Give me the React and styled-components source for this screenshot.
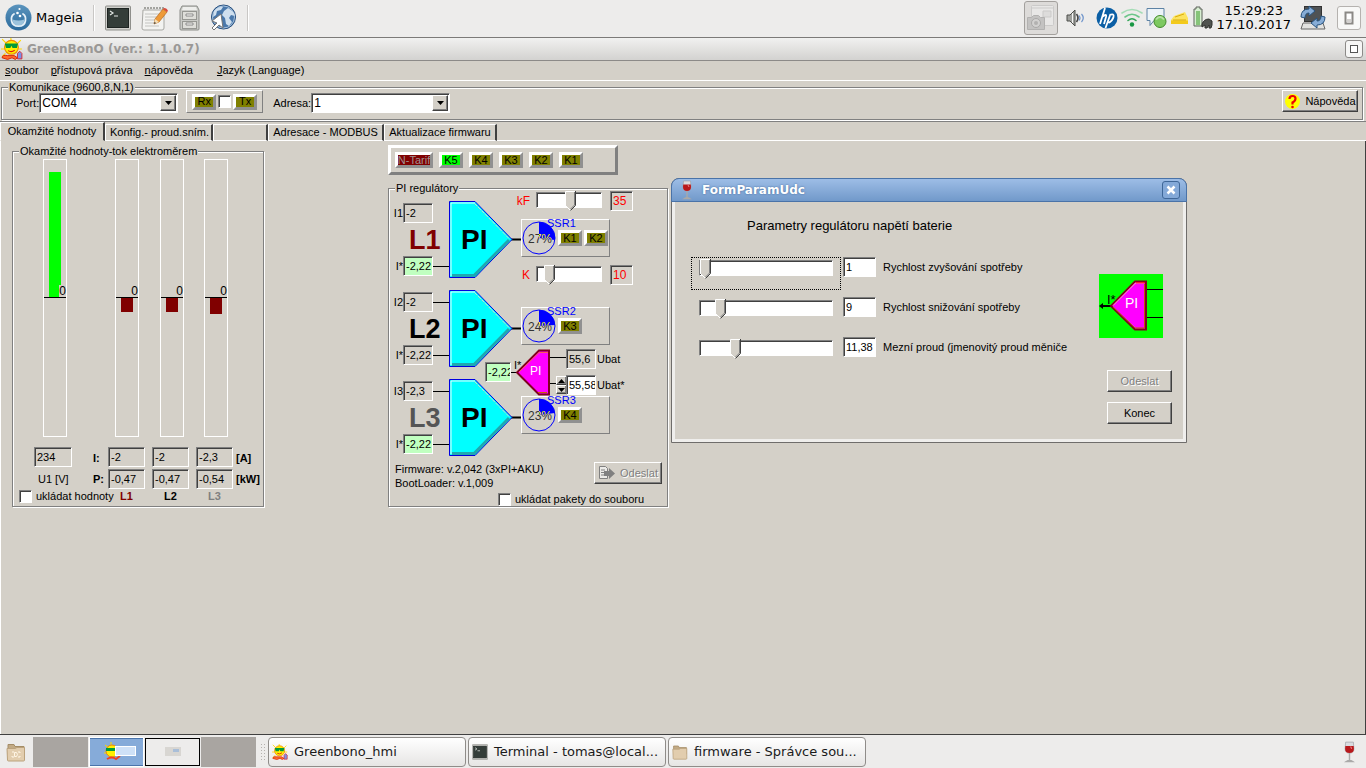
import { useState } from "react"
import styled, { createGlobalStyle, css } from "styled-components"

const GlobalStyle = createGlobalStyle`
    *{
        box-sizing: border-box;
    }
    body{
        margin: 0;
        background-color: #d4d0c8;
        font-family: "Liberation Sans", Arial, sans-serif;
        font-size: 11px;
        line-height: 14px;
        color: #000000;
    }
    button, input, select{
        font: inherit;
        color: inherit;
        margin: 0;
    }
    svg{
        display: block;
        flex: none;
    }
`

const sunken = css`
    border: 1px solid;
    border-color: #808080 #ffffff #ffffff #808080;
    box-shadow: inset 1px 1px 0 #404040;
`

const raised = css`
    border: 1px solid;
    border-color: #ffffff #404040 #404040 #ffffff;
    box-shadow: inset -1px -1px 0 #808080;
`

const Desktop = styled.div`
    min-height: 100vh;
    display: flex;
    flex-direction: column;
    position: relative;
`

/* top panel */
const TopPanel = styled.header`
    height: 38px;
    display: flex;
    align-items: center;
    justify-content: space-between;
    background-color: #edeceb;
    border-bottom: 1px solid #7c7a78;
    font-family: "DejaVu Sans", sans-serif;
    font-size: 13px;
    padding: 0 5px 2px;
`
const PanelGroup = styled.div`
    display: flex;
    align-items: center;
    gap: ${(prop) => prop.$gap}px;
`
const PanelButton = styled.button`
    display: flex;
    align-items: center;
    gap: 4px;
    padding: 0;
    border: 0;
    background: none;
`
const ShotButton = styled(PanelButton)`
    width: 34px;
    height: 34px;
    justify-content: center;
    border: 1px solid #a3a09d;
    border-radius: 3px;
    background-color: #dddbd9;
    margin-right: 5px;
`
const LogoutButton = styled(PanelButton)`
    width: 24px;
    height: 24px;
    justify-content: center;
    border: 1px solid #b5b2af;
    border-radius: 3px;
    background-color: #f8f8f7;
`
const Divider = styled.div`
    width: 2px;
    height: 26px;
    background-color: #c9c7c5;
    border-right: 1px solid #ffffff;
`
const Spacer = styled.div`
    width: 5px;
`
const Clock = styled.time`
    text-align: center;
    line-height: 14px;
    margin-right: 6px;
`

/* main window */
const MainWindow = styled.main`
    flex: 1;
    display: flex;
    flex-direction: column;
    border-bottom: 1px solid #404040;
`
const TitleBar = styled.div`
    height: 23px;
    display: flex;
    align-items: center;
    gap: 4px;
    padding: 0 3px 0 1px;
    background: linear-gradient(#f1f1f0, #d3d2d0);
    border-bottom: 1px solid #8c8a88;
    font-family: "DejaVu Sans", sans-serif;
    color: #9a9896;
    h1{
        flex: 1;
        margin: 0;
        font-size: 12px;
        font-weight: 700;
        line-height: 16px;
    }
`
const MaximizeButton = styled.button`
    width: 18px;
    height: 18px;
    display: flex;
    align-items: center;
    justify-content: center;
    padding: 0;
    border: 1px solid #8c8a88;
    border-radius: 3px;
    background-color: #f6f6f5;
`
const MenuBar = styled.nav`
    height: 20px;
    display: flex;
    align-items: center;
    gap: 12px;
    padding: 0 5px 1px;
    border-bottom: 1px solid #ffffff;
    a{
        color: #000000;
        text-decoration: none;
    }
    a::first-letter{
        text-decoration: underline;
    }
    a:last-child{
        margin-left: 12px;
    }
`

const GroupBox = styled.fieldset`
    min-width: 0;
    margin: 0;
    padding: 0;
    border: 1px solid #808080;
    box-shadow: inset 1px 1px 0 #ffffff, 1px 1px 0 #ffffff;
    legend{
        margin-left: 6px;
        padding: 0 1px;
        line-height: 12px;
        background-color: #d4d0c8;
    }
`
const CommBox = styled(GroupBox)`
    margin: 0 3px 0 1px;
    height: 39px;
`
const CommRow = styled.div`
    display: flex;
    align-items: flex-start;
    padding: 0 4px 0 14px;
    margin-top: -3px;
`
const CommLabel = styled.label`
    display: flex;
    align-items: center;
    margin-top: 3px;
`
const ComboFrame = styled.span`
    display: flex;
    position: relative;
`
const Combo = styled.select`
    ${sunken}
    appearance: none;
    width: 139px;
    height: 20px;
    padding: 0 20px 0 2px;
    border-radius: 0;
    background-color: #ffffff;
    font-size: 12px;
`
const ComboArrow = styled.span`
    ${raised}
    position: absolute;
    right: 2px;
    top: 2px;
    width: 16px;
    height: 16px;
    display: flex;
    align-items: center;
    justify-content: center;
    background-color: #d4d0c8;
    pointer-events: none;
`
const RxTxPanel = styled.div`
    height: 23px;
    display: flex;
    align-items: center;
    gap: 2px;
    padding: 0 5px;
    margin: 0 10px 0 8px;
    border: 1px solid;
    border-color: #ffffff #808080 #808080 #ffffff;
`
const Lamp = styled.span`
    min-width: 24px;
    height: 16px;
    display: flex;
    align-items: center;
    justify-content: center;
    overflow: hidden;
    white-space: nowrap;
    border: 3px solid;
    border-color: #ffffff #909090 #909090 #ffffff;
    background-color: ${(prop) => prop.$color || "#808000"};
    color: ${(prop) => prop.$ink || "#000000"};
    line-height: 11px;
`
const TarifLamp = styled(Lamp)`
    width: 38px;
`
const CheckBox = styled.input.attrs({ type: "checkbox" })`
    ${sunken}
    appearance: none;
    flex: none;
    width: 13px;
    height: 13px;
    background-color: #ffffff;
    &:checked{
        background-color: #404040;
    }
`
const PushButton = styled.button`
    ${raised}
    display: flex;
    align-items: center;
    justify-content: center;
    gap: 4px;
    width: ${(prop) => prop.$width}px;
    height: 22px;
    padding: 0;
    background-color: #d4d0c8;
    white-space: nowrap;
    &:disabled{
        color: #808080;
        text-shadow: 1px 1px 0 #ffffff;
    }
`
const HelpButton = styled(PushButton)`
    margin-left: auto;
`

/* tabs */
const TabList = styled.div`
    display: flex;
    align-items: flex-end;
    height: 20px;
    margin-top: 1px;
    border-top: 1px solid #808080;
    box-shadow: inset 0 -1px 0 #ffffff;
`
const Tab = styled.button`
    width: ${(prop) => prop.$width}px;
    height: ${(prop) => (prop.$active ? 19 : 17)}px;
    padding: 0 4px 1px;
    overflow: hidden;
    white-space: nowrap;
    background-color: #d4d0c8;
    border: 1px solid;
    border-width: 1px 2px 1px 1px;
    border-color: #ffffff #404040 ${(prop) => (prop.$active ? "#d4d0c8" : "#ffffff")} #ffffff;
`
const TabPage = styled.section`
    flex: 1;
    display: flex;
    align-items: flex-start;
    gap: 124px;
    padding: 4px 12px;
    border-left: 1px solid #ffffff;
    border-right: 1px solid #404040;
`

/* meter readings */
const MeterBox = styled(GroupBox)`
    width: 252px;
    margin-left: -1px;
    padding: 2px 0 3px 6px;
    legend{
        margin-left: 0;
    }
`
const MeterGrid = styled.div`
    display: grid;
    grid-template-columns: 74px 15px 44px 44px 40px auto;
    grid-template-rows: 288px 22px 20px 14px;
`
const Gauge = styled.div`
    width: 24px;
    height: 278px;
    margin-left: ${(prop) => prop.$left}px;
    display: flex;
    flex-direction: column;
    border: 1px solid #ffffff;
`
const GaugeHalf = styled.div`
    height: 138px;
    display: flex;
    position: relative;
    justify-content: center;
    align-items: ${(prop) => (prop.$upper ? "flex-end" : "flex-start")};
    border-bottom: ${(prop) => (prop.$upper ? "1px solid #000000" : "0")};
`
const GaugeFill = styled.div`
    width: 12px;
    background-color: ${(prop) => (prop.$upper ? "#00ff00" : "#800000")};
`
const GaugeZero = styled.span`
    position: absolute;
    right: 0;
    bottom: 0;
    font-size: 12px;
    line-height: 12px;
    background-color: #d4d0c8;
`
const Field = styled.input`
    ${sunken}
    width: ${(prop) => prop.$width || 30}px;
    height: 20px;
    padding: 0 0 0 2px;
    border-radius: 0;
    background-color: ${(prop) => prop.$fill || "#d4d0c8"};
    color: ${(prop) => prop.$ink || "#000000"};
    outline: 0;
`
const VoltField = styled(Field)`
    margin-left: 15px;
`
const Caption = styled.span`
    align-self: center;
    padding-left: ${(prop) => prop.$indent || 0}px;
    font-weight: ${(prop) => (prop.$bold ? 700 : 400)};
    color: ${(prop) => prop.$ink || "#000000"};
`
const StoreLabel = styled.label`
    grid-column: 1 / 3;
    display: flex;
    align-items: center;
    gap: 4px;
    white-space: nowrap;
`

/* regulators */
const RegulatorColumn = styled.div`
    display: flex;
    flex-direction: column;
    gap: 7px;
`
const LampPanel = styled.div`
    width: 230px;
    height: 30px;
    display: flex;
    align-items: center;
    gap: 6px;
    padding: 0 4px;
    border: 3px solid;
    border-color: #ffffff #808080 #808080 #ffffff;
`
const RegulatorBox = styled(GroupBox)`
    width: 280px;
`
const Schematic = styled.div`
    display: flex;
    align-items: flex-start;
`
const ChannelColumn = styled.div`
    display: flex;
    flex-direction: column;
    gap: 12px;
    padding: 7px 0 0 3px;
`
const Channel = styled.div`
    display: flex;
    height: 77px;
`
const ChannelInputs = styled.div`
    width: 57px;
    display: flex;
    flex-direction: column;
    justify-content: space-between;
    padding: 2px 0 2px;
`
const Wired = styled.label`
    display: flex;
    align-items: center;
    span{
        width: 11px;
        text-align: right;
    }
    &::after{
        content: "";
        flex: 1;
        border-top: 1px solid ${(prop) => (prop.$open ? "transparent" : "#000000")};
    }
`
const PhaseName = styled.strong`
    padding-left: 17px;
    font-size: 27px;
    line-height: 28px;
    color: ${(prop) => prop.$ink};
`
const OutputColumn = styled.div`
    flex: 1;
    display: flex;
    flex-direction: column;
    margin-top: -4px;
`
const GainRow = styled.label`
    height: 22px;
    display: flex;
    align-items: center;
    color: #ff0000;
    font-size: 12px;
    span{
        width: 14px;
        margin-left: -5px;
        margin-right: 6px;
        text-align: right;
    }
    input:last-child{
        margin-left: 8px;
    }
`
const SsrBox = styled.div`
    width: 89px;
    height: 38px;
    margin: ${(prop) => prop.$margin};
    display: flex;
    align-items: center;
    gap: 2px;
    position: relative;
    border: 1px solid;
    border-color: #ffffff #808080 #808080 #ffffff;
`
const SsrName = styled.span`
    position: absolute;
    left: 25px;
    top: -3px;
    line-height: 12px;
    color: #0000ff;
`
const BatteryStage = styled.div`
    display: flex;
    height: 47px;
    margin-left: -36px;
    position: relative;
`
const BatteryInput = styled.div`
    padding-top: 13px;
`
const BatteryFields = styled.div`
    display: flex;
    flex-direction: column;
    gap: 6px;
    margin-left: -10px;
    white-space: nowrap;
`
const BatteryRow = styled.label`
    display: flex;
    align-items: center;
    justify-content: flex-end;
    gap: 1px;
    span:last-child{
        width: 32px;
    }
`
const Spinner = styled.span`
    display: flex;
    flex-direction: column;
    margin-right: -2px;
    button{
        ${raised}
        width: 11px;
        height: 9px;
        padding: 0;
        display: flex;
        align-items: center;
        justify-content: center;
        background-color: #d4d0c8;
    }
`
const VersionRow = styled.div`
    display: flex;
    justify-content: space-between;
    padding: 6px 5px 0 6px;
    p{
        margin: 0;
    }
`
const PacketLabel = styled.label`
    display: flex;
    align-items: center;
    gap: 4px;
    margin: 2px 0 0 109px;
`

const sliderThumb = `url("data:image/svg+xml,%3Csvg xmlns='http://www.w3.org/2000/svg' width='11' height='20'%3E%3Cpath d='M0 0H11V14L5.500 20L0 14Z' fill='%23d4d0c8'/%3E%3Cpath d='M.5 15V.5H10' fill='none' stroke='white'/%3E%3Cpath d='M.5 14.500L5.500 19.500' stroke='white'/%3E%3Cpath d='M9.500 1V14L5.500 18' fill='none' stroke='%23808080'/%3E%3Cpath d='M10.500 0V14.500L5.500 19.500' fill='none' stroke='%23404040'/%3E%3C/svg%3E")`

const Slider = styled.input.attrs({ type: "range" })`
    appearance: none;
    width: ${(prop) => prop.$width}px;
    height: 20px;
    background: none;
    outline: 0;
    &::-webkit-slider-runnable-track{
        ${sunken}
        height: 16px;
        margin-bottom: 2px;
        background-color: #ffffff;
    }
    &::-webkit-slider-thumb{
        appearance: none;
        width: 11px;
        height: 20px;
        margin-top: -2px;
        background: ${sliderThumb};
    }
`

/* parameter dialog */
const Dialog = styled.section`
    position: absolute;
    left: 671px;
    top: 178px;
    width: 516px;
    border: 1px solid #6f6d6b;
    border-radius: 8px 8px 0 0;
    background-color: #d4d0c8;
`
const DialogTitle = styled.div`
    height: 24px;
    display: flex;
    align-items: center;
    gap: 10px;
    margin: -1px -1px 0;
    padding: 0 6px 0 10px;
    border: 1px solid #4a73a8;
    border-radius: 8px 8px 0 0;
    background: linear-gradient(#9dbde6, #7199ca);
    color: #ffffff;
    h2{
        flex: 1;
        margin: 0;
        font-family: "DejaVu Sans", sans-serif;
        font-size: 12px;
        font-weight: 700;
        line-height: 16px;
        text-shadow: 0 0 2px #3e6597;
    }
`
const CloseButton = styled.button`
    width: 18px;
    height: 18px;
    display: flex;
    align-items: center;
    justify-content: center;
    padding: 0;
    border: 1px solid #3f6798;
    border-radius: 3px;
    background-color: #84a9d8;
`
const DialogBody = styled.div`
    display: flex;
    justify-content: space-between;
    padding: 16px 11px 15px 16px;
    border: 3px solid #efeeec;
    border-top: 0;
    h3{
        margin: 0 0 23px 56px;
        font-size: 13px;
        font-weight: 400;
        line-height: 16px;
    }
`
const ParamRow = styled.div`
    height: 40px;
    display: flex;
    align-items: flex-start;
    label{
        padding: 3px 0 0 7px;
    }
`
const SliderFrame = styled.div`
    width: 150px;
    height: 33px;
    margin-right: 2px;
    padding: 1px 7px;
    border: 1px dotted ${(prop) => (prop.$focused ? "#000000" : "transparent")};
`
const DialogSide = styled.div`
    display: flex;
    flex-direction: column;
    align-items: flex-end;
    padding-top: 56px;
    gap: 10px;
    svg{
        margin: 0 9px 22px 0;
    }
`

/* bottom panel */
const TaskBar = styled.footer`
    height: 33px;
    display: flex;
    align-items: center;
    padding: 0 11px 0 6px;
    background-color: #edeceb;
    font-family: "DejaVu Sans", sans-serif;
    font-size: 13px;
    > svg:last-child{
        margin-left: auto;
    }
`
const Pager = styled.div`
    display: flex;
    gap: 1px;
    margin: 0 4px 0 7px;
    background-color: #edeceb;
`
const Workspace = styled.button`
    width: 55px;
    height: 30px;
    display: flex;
    align-items: center;
    justify-content: center;
    padding: 0;
    border: 0;
    background-color: #a9a5a1;
    ${(prop) => prop.$active && css`
        background-color: #86abd9;
        border: 1px solid #ffffff;
        box-shadow: inset 0 1px 0 #4a74ab, inset 0 -1px 0 #4a74ab;
    `}
    ${(prop) => prop.$framed && css`
        height: 28px;
        align-self: center;
        background-color: #edeceb;
        border: 1px solid #000000;
    `}
`
const Grip = styled.div`
    width: 6px;
    height: 18px;
    margin-right: 2px;
    background-image: radial-gradient(#b4b1ae 1px, transparent 1px);
    background-size: 3px 3px;
`
const TaskButton = styled.button`
    width: 198px;
    height: 30px;
    display: flex;
    align-items: center;
    gap: 6px;
    margin-right: 2px;
    padding: 0 3px;
    border: 1px solid #8f8c89;
    border-radius: 4px;
    background: linear-gradient(#ffffff, #e6e5e4);
    color: #1a1a1a;
    white-space: nowrap;
`

const MageiaIcon = () => (
    <svg width="27" height="27" viewBox="0 0 27 27">
        <defs>
            <linearGradient id="mageia" x2="0" y2="1">
                <stop stopColor="#5b94bd" />
                <stop offset="1" stopColor="#2b6a9c" />
            </linearGradient>
        </defs>
        <circle cx="13.500" cy="13.500" r="13" fill="url(#mageia)" />
        <path d="M9 10C5.500 12 4.500 22 13.500 22S21.500 12 18 10" fill="none" stroke="#e7f1f8" strokeWidth="1.800" strokeLinecap="round" />
        <path d="M7.500 15.500q6 2 12 0q0 6-6 6t-6-6" fill="#9cc3dd" />
        <circle cx="12.500" cy="9" r="1.300" fill="#fff" />
        <circle cx="14.500" cy="5" r="1.100" fill="#fff" />
        <circle cx="15" cy="12" r="1.300" fill="#fff" />
    </svg>
)

const TerminalIcon = ({ size }) => (
    <svg width={size} height={size} viewBox="0 0 26 26">
        <rect x=".5" y="1" width="25" height="24" rx="1" fill="#d0d0cc" stroke="#8f8f8b" />
        <rect x="2.500" y="3.500" width="21" height="19" fill="#343d39" stroke="#1e2422" />
        <path d="M5 6l3 2-3 2M9 11h4" fill="none" stroke="#e2e6e3" strokeWidth="1.200" />
    </svg>
)

const NotesIcon = () => (
    <svg width="28" height="26" viewBox="0 0 28 26">
        <path d="M2 5h21v18q0 2-2 2H3q-2 0-2-2z" fill="#f3f3f1" stroke="#a7a7a3" />
        <path d="M4 4v-2m3 2v-2m3 2v-2m3 2v-2m3 2v-2m3 2v-2m3 2v-2" stroke="#8a8a86" strokeWidth="1.500" />
        <path d="M4 9h15M4 12h13M4 15h10M4 18h9M4 21h14" stroke="#c3c3c0" />
        <path d="M13 19l1-5L22 4l4 3-8 10z" fill="#ee9a38" stroke="#b86a1e" strokeWidth=".7" />
        <path d="M22 4l1-1q3 0 4 3l-1 1z" fill="#d94b3d" />
        <path d="M13 19l1-5 4 3z" fill="#f4dfb8" />
        <path d="M13 19l.5-2 1.500 1z" fill="#222" />
    </svg>
)

const CabinetIcon = () => (
    <svg width="21" height="26" viewBox="0 0 21 26">
        <path d="M3 1h15l2 4v19q0 1-1 1H2q-1 0-1-1V5z" fill="#c9cac6" stroke="#8b8c88" />
        <path d="M4 2h13l1 3H3z" fill="#eeeeec" />
        <rect x="3.500" y="6.500" width="14" height="8" fill="#deded9" stroke="#969792" />
        <rect x="3.500" y="16.500" width="14" height="7" fill="#deded9" stroke="#969792" />
        <path d="M7 9h7v2H7zM7 18h7v2H7z" fill="#f8f8f6" stroke="#777" strokeWidth=".8" />
    </svg>
)

const GlobeIcon = () => (
    <svg width="27" height="27" viewBox="0 0 27 27">
        <circle cx="13.500" cy="13" r="12" fill="#4a78ab" stroke="#294f7d" />
        <circle cx="13.500" cy="13" r="11" fill="none" stroke="#a9c4df" />
        <path d="M4 7q5-5 9-4l-2 3-4 1-1 4-3 2zM14 7l4-3q6 3 7 8l-4-1-2 3 3 4-3 4-3-2-1-6-3-3z" fill="#cfdfee" />
        <path d="M11 10l2 14-4-3-5 5-2-2 5-5-5-2z" fill="#fff" stroke="#777" />
    </svg>
)

const ShotIcon = () => (
    <svg width="29" height="28" viewBox="0 0 29 28" opacity=".5">
        <rect x="5.500" y="1.500" width="22" height="20" rx="1" fill="#f4f4f4" stroke="#bbb" />
        <path d="M6 4h21M17 7h8v6h-8z" stroke="#bbb" fill="#ddd" />
        <path d="M1.500 13.500h4l2-2h5l2 2h4v12h-17z" fill="#aaa" stroke="#888" />
        <circle cx="10" cy="19" r="4.500" fill="#c9c9c9" stroke="#777" />
        <circle cx="10" cy="19" r="2" fill="#888" />
    </svg>
)

const SpeakerIcon = () => (
    <svg width="19" height="20" viewBox="0 0 19 20">
        <path d="M1 7h3l5-5v16l-5-5H1z" fill="#a0a19d" stroke="#4d4e4b" />
        <path d="M6.500 5v10" stroke="#f4f4f4" />
        <path d="M10.500 6q3 4 0 8" fill="none" stroke="#444" strokeWidth="1.600" />
        <path d="M13 7.500q2 2.500 0 5M15.500 6q3.500 4 0 8" fill="none" stroke="#6d93cb" strokeWidth="1.200" />
    </svg>
)

const HpIcon = () => (
    <svg width="22" height="22" viewBox="0 0 22 22">
        <circle cx="11" cy="11" r="10.500" fill="#0b5fa5" />
        <path d="M9 1L4 17M6 10q5-4 4 0l-2 7M14.500 7l-5 14M13.500 8q5-2 4 2t-5 6" fill="none" stroke="#fff" strokeWidth="1.800" />
    </svg>
)

const WifiIcon = () => (
    <svg width="22" height="19" viewBox="0 0 22 19">
        <g fill="none" strokeWidth="1.600" strokeLinecap="round">
            <path d="M1 5q10-7 20 0" stroke="#a5dcb6" />
            <path d="M4 9q7-5.500 14 0" stroke="#6cc689" />
            <path d="M7 12.500q4-3.500 8 0" stroke="#31a556" />
        </g>
        <circle cx="11" cy="16.500" r="2.200" fill="#189743" />
    </svg>
)

const ChatIcon = () => (
    <svg width="21" height="22" viewBox="0 0 21 22">
        <path d="M1 1.500h17v12H8l-4 5v-5H1z" fill="#edf3f8" stroke="#5e83a5" />
        <circle cx="14" cy="14.500" r="6" fill="#7dc860" stroke="#428a2b" />
        <path d="M10 12.500q4-5 8 0" fill="none" stroke="#b6e2a4" strokeWidth="2" />
    </svg>
)

const NoteIcon = () => (
    <svg width="19" height="14" viewBox="0 0 19 14">
        <path d="M4 5l11-4 3 6v6H1V9z" fill="#fce35e" />
        <path d="M1 9.500h17V13H1z" fill="#f3ca1c" />
        <path d="M5 6l9-3M3 9h13" stroke="#d9ac10" />
    </svg>
)

const BatteryIcon = () => (
    <svg width="22" height="23" viewBox="0 0 22 23">
        <path d="M4 1h4v2h2v17H2V3h2z" fill="#d8eed2" stroke="#5c625a" />
        <rect x="4" y="5" width="4" height="14" fill="#86c479" />
        <path d="M10 18q2-5 7-5l3 2v4l-1 3h-2v-3l-2 3h-2v-3l-3 2z" fill="#50534f" stroke="#30332f" />
    </svg>
)

const UpdateIcon = () => (
    <svg width="26" height="26" viewBox="0 0 26 26">
        <rect x="4.500" y="1.500" width="17" height="15" fill="#4f5254" stroke="#333" />
        <path d="M3 18h20l2 6H1z" fill="#e2e2e0" stroke="#666" />
        <path d="M1 12q0-8 8-8V1l6 5-6 5V8q-4 0-4 5z" fill="#86acd6" stroke="#27537f" />
        <path d="M25 12q0 8-8 8v3l-6-5 6-5v3q4 0 4-5z" fill="#86acd6" stroke="#27537f" />
    </svg>
)

const SwitchIcon = () => (
    <svg width="10" height="14" viewBox="0 0 10 14">
        <rect x="1.500" y="1.500" width="7" height="11" fill="#fff" stroke="#8b8986" strokeWidth="2" />
        <path d="M3 8h4v4H3z" fill="#d3d1cf" />
    </svg>
)

const SunIcon = ({ size }) => (
    <svg width={size} height={size} viewBox="0 0 20 20">
        <path d="M1 1l4 4M9 0v3M18 2l-3 3M0 10h3M19 10h-3M1 17l3-3" stroke="#ffd800" />
        <path d="M1 18q0-3 5-2l6 0 3 2-2 1.500-3-1.500-4 1.500z" fill="#ff6a2a" stroke="#d01c00" strokeWidth=".8" />
        <circle cx="9.500" cy="8.500" r="6.300" fill="#ffee00" stroke="#f08a00" />
        <path d="M3.500 5h12l-1 4h-4l-1-2-1 2h-4z" fill="#009a38" />
        <path d="M6.500 11.500q3 2 6-.5" fill="none" stroke="#e01010" />
        <path d="M15 14l2-2 2 2v5h-4z" fill="#7990e8" stroke="#e02020" strokeWidth=".8" />
    </svg>
)

const HelpIcon = () => (
    <svg width="17" height="17" viewBox="0 0 17 17">
        <circle cx="8.500" cy="8.500" r="7.500" fill="#ffff00" />
        <path d="M5.500 6q0-3 3-3t3 2.500-3 4v2" fill="none" stroke="#ee0000" strokeWidth="2.200" />
        <circle cx="8.500" cy="14" r="1.300" fill="#ee0000" />
    </svg>
)

const WineIcon = ({ height }) => (
    <svg width={height / 2} height={height} viewBox="0 0 10 20">
        <path d="M1.500 1h7l.5 6q0 4-4 4T1 7z" fill="#dadce0" stroke="#9a9ca0" strokeWidth=".6" />
        <path d="M1.200 4.500h7.600L9 7q0 4-4 4T1 7z" fill="#b8191c" />
        <path d="M6 5l1 2" stroke="#f08080" />
        <path d="M5 11v6.500M2 18.700q3-2 6 0z" fill="#ccc" stroke="#aaa9a8" strokeWidth="1.300" />
    </svg>
)

const FolderIcon = ({ home, size }) => (
    <svg width={size} height={size} viewBox="0 0 20 20">
        <path d="M2 2.500h6l1 2h9v8H2z" fill="#c2aa85" stroke="#a48c66" />
        <path d="M1 6.500h8l2-1h7.500v12.500q0 1-1 1h-15q-1 0-1-1z" fill="#e2cdae" stroke="#bba27c" />
        {home && <path d="M6 10h2M12 10h2v1M6 15v-1M6 15h2M12 15h2v-1M8.500 10.500h2q2 2 0 4h-2z" fill="none" stroke="#fff6e6" />}
    </svg>
)

const SendIcon = () => (
    <svg width="18" height="16" viewBox="0 0 18 16">
        <path d="M1.500 1.500h6l2 2v10h-8z" fill="#ecebe8" stroke="#808080" />
        <path d="M3 5h4M3 7.500h4M3 10h4" stroke="#808080" />
        <path d="M6 6h5V3l6 5.500L11 14v-3H6z" fill="#808080" />
    </svg>
)

const Triangle = ({ up }) => (
    <svg width="7" height="4" viewBox="0 0 7 4">
        <path d={up ? "M0 4h7L3.500 0z" : "M0 0h7L3.500 4z"} />
    </svg>
)

const PiBlock = () => (
    <svg width="72" height="77" viewBox="0 0 72 77">
        <path d="M62 38.500h10" stroke="#000" strokeWidth="2" />
        <path d="M.5.500H26L63 38.500L26 76.500H.5z" fill="#00ffff" stroke="#0000e0" />
        <path d="M2 75V2h24" fill="none" stroke="#e8ffff" />
        <path d="M3 74.500h22L60 39" fill="none" stroke="#20a8b0" strokeWidth="3" />
        <path d="M25.500 2.500L60.500 38" fill="none" stroke="#d8d4cc" strokeDasharray="4 1" />
        <text x="12" y="48" fontFamily="Liberation Sans, Arial, sans-serif" fontSize="28" fontWeight="700">PI</text>
    </svg>
)

const BatteryPi = () => (
    <svg width="55" height="47" viewBox="0 0 55 47">
        <path d="M0 23.500h7M39 8.500h16M39 34.500h8" stroke="#000" />
        <path d="M28 1.500h10v44H28L6 23.500z" fill="#ff00ff" stroke="#800020" strokeWidth="2" />
        <path d="M8 23L28 3.500h9" fill="none" stroke="#ff5a5a" />
        <path d="M27 43.500h9" fill="none" stroke="#c86400" />
        <text x="19" y="26" fill="#fff" fontFamily="Liberation Sans, Arial, sans-serif" fontSize="12">PI</text>
        <text x="3" y="20" fontFamily="Liberation Sans, Arial, sans-serif" fontSize="11">I*</text>
    </svg>
)

const DialogPi = () => (
    <svg width="64" height="64" viewBox="0 0 64 64">
        <rect width="64" height="64" fill="#00ff00" />
        <path d="M47 15.500h17M47 43.500h17" stroke="#000" />
        <path d="M2 32h10" stroke="#000" strokeWidth="2" />
        <path d="M0 32l4-3v6z" />
        <path d="M36 7.500h11v48H36L12 32z" fill="#ff00ff" stroke="#800020" strokeWidth="2" />
        <path d="M14 31.500L36.500 9H45" fill="none" stroke="#ffb0c0" />
        <path d="M37 8.800h9" stroke="#ff0000" />
        <path d="M45.500 10v44H36L14 33" fill="none" stroke="#b46400" />
        <text x="26" y="34" fill="#fff" fontFamily="Liberation Sans, Arial, sans-serif" fontSize="14">PI</text>
        <text x="8" y="30" fontFamily="Liberation Sans, Arial, sans-serif" fontSize="13">I*</text>
    </svg>
)

/* share of the firing angle as a blue sector of a circle */
const Dial = ({ value }) => {
    const angle = (value / 100) * Math.PI * 2
    const x = 17 + 16 * Math.sin(angle)
    const y = 17 - 16 * Math.cos(angle)
    return (
        <svg width="34" height="34" viewBox="0 0 34 34">
            <circle cx="17" cy="17" r="16" fill="none" stroke="#0000ff" />
            <text x="6" y="22" fontFamily="Liberation Sans, Arial, sans-serif" fontSize="12" fill="#333">{value}%</text>
            <path d={`M17 17V1A16 16 0 0 1 ${x} ${y}z`} fill="#0000ff" />
            <clipPath id={`sector${value}`}>
                <path d={`M17 17V1A16 16 0 0 1 ${x} ${y}z`} />
            </clipPath>
            <text x="6" y="22" fontFamily="Liberation Sans, Arial, sans-serif" fontSize="12" fill="#ffff00" clipPath={`url(#sector${value})`}>{value}%</text>
        </svg>
    )
}

const MeterGauge = ({ left, up = 0, down = 0 }) => (
    <Gauge $left={left}>
        <GaugeHalf $upper>
            <GaugeFill $upper style={{ height: up }} />
            <GaugeZero>0</GaugeZero>
        </GaugeHalf>
        <GaugeHalf>
            <GaugeFill style={{ height: down }} />
        </GaugeHalf>
    </Gauge>
)

const channels = [
    { id: 1, current: "-2", wanted: "-2,22", ink: "#800000", fill: "#c0ffc0" },
    { id: 2, current: "-2", wanted: "-2,22", ink: "#000000" },
    { id: 3, current: "-2,3", wanted: "-2,22", ink: "#555555", fill: "#c0ffc0" },
]

const tabs = [
    { text: "Okamžité hodnoty", width: 105 },
    { text: "Konfig.- proud.sním.", width: 108 },
    { text: "", width: 55 },
    { text: "Adresace - MODBUS", width: 116 },
    { text: "Aktualizace firmwaru", width: 113 },
]

const Ssr = ({ id, value, lamps, margin }) => (
    <SsrBox $margin={margin}>
        <Dial value={value} />
        <SsrName>SSR{id}</SsrName>
        {lamps.map((lamp) => <Lamp key={lamp}>{lamp}</Lamp>)}
    </SsrBox>
)

const Gain = ({ name, initial, text }) => {
    const [value, setValue] = useState(initial)
    return (
        <GainRow>
            <span>{name}</span>
            <Slider $width={66} value={value} onChange={(e) => setValue(e.target.value)} />
            <Field $width={23} $ink="#ff0000" readOnly value={text} aria-label={name} />
        </GainRow>
    )
}

const Param = ({ id, initial, text, label, focused }) => {
    const [value, setValue] = useState(initial)
    return (
        <ParamRow>
            <SliderFrame $focused={focused}>
                <Slider $width={134} aria-label={label} value={value} onChange={(e) => setValue(e.target.value)} />
            </SliderFrame>
            <Field id={id} $width={33} $fill="#ffffff" defaultValue={text} />
            <label htmlFor={id}>{label}</label>
        </ParamRow>
    )
}

export default function App() {
    const [tab, setTab] = useState(tabs[0].text)

    return (
        <Desktop>
            <GlobalStyle />
            <TopPanel>
                <PanelGroup $gap={10}>
                    <PanelButton><MageiaIcon />Mageia</PanelButton>
                    <Divider />
                    <PanelButton aria-label="Terminál"><TerminalIcon size={26} /></PanelButton>
                    <PanelButton aria-label="Editor"><NotesIcon /></PanelButton>
                    <PanelButton aria-label="Soubory"><CabinetIcon /></PanelButton>
                    <PanelButton aria-label="Prohlížeč"><GlobeIcon /></PanelButton>
                    <Divider />
                </PanelGroup>
                <PanelGroup $gap={3}>
                    <ShotButton aria-label="Snímek"><ShotIcon /></ShotButton>
                    <SpeakerIcon />
                    <Spacer />
                    <HpIcon />
                    <WifiIcon />
                    <ChatIcon />
                    <NoteIcon />
                    <BatteryIcon />
                    <Clock>15:29:23<br />17.10.2017</Clock>
                    <UpdateIcon />
                    <Spacer />
                    <LogoutButton aria-label="Odhlásit"><SwitchIcon /></LogoutButton>
                </PanelGroup>
            </TopPanel>

            <MainWindow>
                <TitleBar>
                    <SunIcon size={22} />
                    <h1>GreenBonO (ver.: 1.1.0.7)</h1>
                    <MaximizeButton aria-label="Maximalizovat">
                        <svg width="8" height="8"><rect x=".5" y=".5" width="7" height="7" fill="#fff" stroke="#555" /></svg>
                    </MaximizeButton>
                </TitleBar>
                <MenuBar>
                    <a href="#soubor">soubor</a>
                    <a href="#prava">přístupová práva</a>
                    <a href="#napoveda">nápověda</a>
                    <a href="#jazyk">Jazyk (Language)</a>
                </MenuBar>

                <CommBox>
                    <legend>Komunikace (9600,8,N,1)</legend>
                    <CommRow>
                        <CommLabel>
                            Port:
                            <ComboFrame>
                                <Combo defaultValue="COM4"><option>COM4</option></Combo>
                                <ComboArrow><Triangle /></ComboArrow>
                            </ComboFrame>
                        </CommLabel>
                        <RxTxPanel>
                            <Lamp>Rx</Lamp>
                            <CheckBox aria-label="Rx/Tx" />
                            <Lamp>Tx</Lamp>
                        </RxTxPanel>
                        <CommLabel>
                            Adresa:
                            <ComboFrame>
                                <Combo defaultValue="1"><option>1</option></Combo>
                                <ComboArrow><Triangle /></ComboArrow>
                            </ComboFrame>
                        </CommLabel>
                        <HelpButton $width={76}><HelpIcon />Nápověda</HelpButton>
                    </CommRow>
                </CommBox>

                <TabList role="tablist">
                    {tabs.map((item) => (
                        <Tab
                            key={item.text}
                            role="tab"
                            $width={item.width}
                            $active={item.text === tab}
                            onClick={() => setTab(item.text)}
                        >
                            {item.text}
                        </Tab>
                    ))}
                </TabList>

                <TabPage>
                    <MeterBox>
                        <legend>Okamžité hodnoty-tok elektroměrem</legend>
                        <MeterGrid>
                            <MeterGauge left={24} up={125} />
                            <span />
                            <MeterGauge left={7} down={14} />
                            <MeterGauge left={8} down={14} />
                            <MeterGauge left={8} down={16} />
                            <span />

                            <VoltField $width={38} readOnly value="234" aria-label="U1 [V]" />
                            <Caption $bold>I:</Caption>
                            <Field $width={37} readOnly value="-2" aria-label="I L1" />
                            <Field $width={37} readOnly value="-2" aria-label="I L2" />
                            <Field $width={37} readOnly value="-2,3" aria-label="I L3" />
                            <Caption $bold>[A]</Caption>

                            <Caption $indent={19}>U1 [V]</Caption>
                            <Caption $bold>P:</Caption>
                            <Field $width={37} readOnly value="-0,47" aria-label="P L1" />
                            <Field $width={37} readOnly value="-0,47" aria-label="P L2" />
                            <Field $width={37} readOnly value="-0,54" aria-label="P L3" />
                            <Caption $bold>[kW]</Caption>

                            <StoreLabel><CheckBox />ukládat hodnoty</StoreLabel>
                            <Caption $bold $indent={12} $ink="#800000">L1</Caption>
                            <Caption $bold $indent={12}>L2</Caption>
                            <Caption $bold $indent={12} $ink="#808080">L3</Caption>
                        </MeterGrid>
                    </MeterBox>

                    <RegulatorColumn>
                        <LampPanel>
                            <TarifLamp $color="#800000" $ink="#a09090">N-Tarif</TarifLamp>
                            <Lamp $color="#00ff00">K5</Lamp>
                            <Lamp>K4</Lamp>
                            <Lamp>K3</Lamp>
                            <Lamp>K2</Lamp>
                            <Lamp>K1</Lamp>
                        </LampPanel>

                        <RegulatorBox>
                            <legend>PI regulátory</legend>
                            <Schematic>
                                <ChannelColumn>
                                    {channels.map((item) => (
                                        <Channel key={item.id}>
                                            <ChannelInputs>
                                                <Wired $open={item.id === 1}>
                                                    <span>I{item.id}</span>
                                                    <Field readOnly value={item.current} />
                                                </Wired>
                                                <PhaseName $ink={item.ink}>L{item.id}</PhaseName>
                                                <Wired>
                                                    <span>I*</span>
                                                    <Field $fill={item.fill} readOnly value={item.wanted} />
                                                </Wired>
                                            </ChannelInputs>
                                            <PiBlock />
                                        </Channel>
                                    ))}
                                </ChannelColumn>
                                <OutputColumn>
                                    <Gain name="kF" initial={53} text="35" />
                                    <Ssr id={1} value={27} lamps={["K1", "K2"]} margin="7px 0" />
                                    <Gain name="K" initial={13} text="10" />
                                    <Ssr id={2} value={24} lamps={["K3"]} margin="21px 0 4px" />
                                    <BatteryStage>
                                        <BatteryInput>
                                            <Field $width={26} $fill="#c0ffc0" readOnly value="-2,22" aria-label="I*" />
                                        </BatteryInput>
                                        <BatteryPi />
                                        <BatteryFields>
                                            <BatteryRow>
                                                <Field readOnly value="55,6" />
                                                <span>Ubat</span>
                                            </BatteryRow>
                                            <BatteryRow>
                                                <Spinner>
                                                    <button aria-label="Zvýšit"><Triangle up /></button>
                                                    <button aria-label="Snížit"><Triangle /></button>
                                                </Spinner>
                                                <Field $fill="#ffffff" defaultValue="55,58" aria-label="Ubat*" />
                                                <span>Ubat*</span>
                                            </BatteryRow>
                                        </BatteryFields>
                                    </BatteryStage>
                                    <Ssr id={3} value={23} lamps={["K4"]} margin="0" />
                                </OutputColumn>
                            </Schematic>
                            <VersionRow>
                                <p>Firmware: v.2,042 (3xPI+AKU)<br />BootLoader: v.1,009</p>
                                <PushButton $width={68} disabled><SendIcon />Odeslat</PushButton>
                            </VersionRow>
                            <PacketLabel><CheckBox />ukládat pakety do souboru</PacketLabel>
                        </RegulatorBox>
                    </RegulatorColumn>
                </TabPage>
            </MainWindow>

            <Dialog role="dialog" aria-label="FormParamUdc">
                <DialogTitle>
                    <WineIcon height={20} />
                    <h2>FormParamUdc</h2>
                    <CloseButton aria-label="Zavřít">
                        <svg width="10" height="10"><path d="M1.500 1.500l7 7M8.500 1.500l-7 7" stroke="#fff" strokeWidth="2.500" /></svg>
                    </CloseButton>
                </DialogTitle>
                <DialogBody>
                    <div>
                        <h3>Parametry regulátoru napětí baterie</h3>
                        <Param id="up" initial={0} text="1" label="Rychlost zvyšování spotřeby" focused />
                        <Param id="down" initial={12} text="9" label="Rychlost snižování spotřeby" />
                        <Param id="limit" initial={25} text="11,38" label="Mezní proud (jmenovitý proud měniče" />
                    </div>
                    <DialogSide>
                        <DialogPi />
                        <PushButton $width={65} disabled>Odeslat</PushButton>
                        <PushButton $width={65}>Konec</PushButton>
                    </DialogSide>
                </DialogBody>
            </Dialog>

            <TaskBar>
                <FolderIcon home size={20} />
                <Pager>
                    <Workspace aria-label="Plocha 1" />
                    <Workspace $active aria-label="Plocha 2">
                        <svg width="40" height="22" viewBox="0 0 40 22">
                            <path d="M8 4l4 3M14 1v4M7 12h4" stroke="#ffd800" />
                            <circle cx="15" cy="10" r="6" fill="#ffee00" stroke="#f08a00" />
                            <path d="M9 7h10v3H9z" fill="#009a38" />
                            <path d="M10 18q5-3 9 0l4-3" fill="none" stroke="#f04020" strokeWidth="2" />
                            <rect x="18.500" y="5.500" width="20" height="9" fill="#cfe1f7" stroke="#fff" />
                        </svg>
                    </Workspace>
                    <Workspace $framed aria-label="Plocha 3">
                        <svg width="16" height="9"><rect width="16" height="9" fill="#d8d6d2" /><rect x="8" y="2" width="6" height="3" fill="#a9bed8" /></svg>
                    </Workspace>
                    <Workspace aria-label="Plocha 4" />
                </Pager>
                <Grip />
                <TaskButton><SunIcon size={16} />Greenbono_hmi</TaskButton>
                <TaskButton><TerminalIcon size={16} />Terminal - tomas@local...</TaskButton>
                <TaskButton><FolderIcon size={16} />firmware - Správce sou...</TaskButton>
                <WineIcon height={22} />
            </TaskBar>
        </Desktop>
    )
}
